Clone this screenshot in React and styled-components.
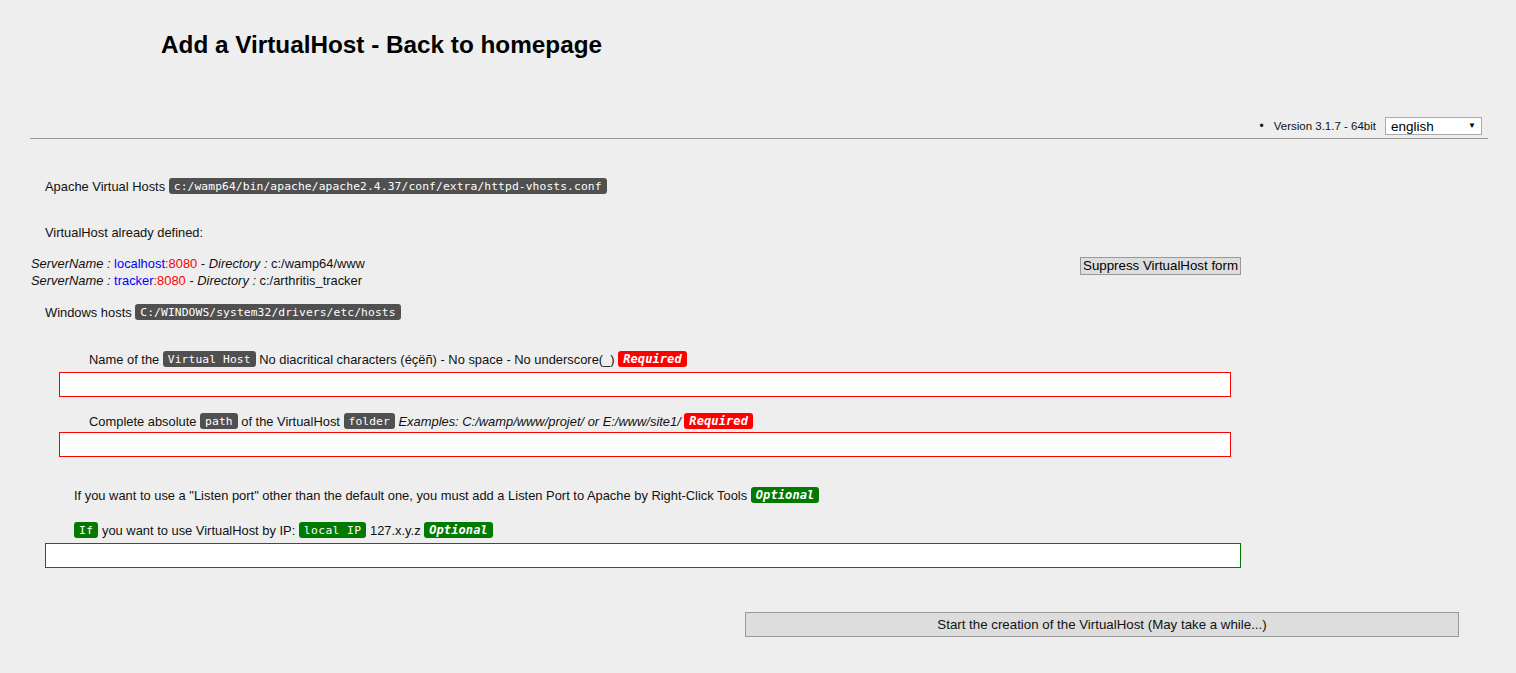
import styled, { createGlobalStyle } from "styled-components";

const GlobalStyle = createGlobalStyle`
  html, body {
    margin: 0;
    padding: 0;
    background: #eeeeee;
  }
  body {
    font-family: "Liberation Sans", Arial, sans-serif;
    font-size: 12.9px;
    color: #111;
  }
`;

const HOSTS = [
  { name: "localhost", port: "8080", dir: "c:/wamp64/www" },
  { name: "tracker", port: "8080", dir: "c:/arthritis_tracker" },
];

export default function App() {
  return (
    <>
      <GlobalStyle />
      <Page>
        <Title>Add a VirtualHost - Back to homepage</Title>

        <VersionRow>
          <Bullet>•</Bullet>
          <VersionText>Version 3.1.7 - 64bit</VersionText>
          <SelectWrap>
            <LangSelect defaultValue="english">
              <option value="english">english</option>
              <option value="french">français</option>
            </LangSelect>
            <Arrow>▼</Arrow>
          </SelectWrap>
        </VersionRow>
        <Rule />

        <Line $indent={15} $top={39}>
          Apache Virtual Hosts&nbsp;
          <Badge>c:/wamp64/bin/apache/apache2.4.37/conf/extra/httpd-vhosts.conf</Badge>
        </Line>

        <Line $indent={15} $top={30}>VirtualHost already defined:</Line>

        <Defined>
          <HostList>
            {HOSTS.map((h) => (
              <HostLine key={h.name}>
                <em>ServerName :</em> <Blue>{h.name}</Blue>
                <Red>:{h.port}</Red> - <em>Directory :</em> {h.dir}
              </HostLine>
            ))}
          </HostList>
          <GreyButton>Suppress VirtualHost form</GreyButton>
        </Defined>

        <Line $indent={15} $top={15}>
          Windows hosts&nbsp;
          <Badge>C:/WINDOWS/system32/drivers/etc/hosts</Badge>
        </Line>

        <Line $indent={59} $top={31}>
          Name of the&nbsp;<Badge>Virtual Host</Badge>&nbsp;No diacritical characters (éçëñ) -
          No space - No underscore(_)&nbsp;<Badge $kind="required">Required</Badge>
        </Line>
        <Field $indent={29} $width={1172} $gap={5} />

        <Line $indent={59} $top={16}>
          Complete absolute&nbsp;<Badge>path</Badge>&nbsp;of the VirtualHost&nbsp;
          <Badge>folder</Badge>&nbsp;<em>Examples: C:/wamp/www/projet/ or E:/www/site1/</em>
          &nbsp;<Badge $kind="required">Required</Badge>
        </Line>
        <Field $indent={29} $width={1172} $gap={3} />

        <Line $indent={44} $top={30}>
          If you want to use a "Listen port" other than the default one, you must add a Listen
          Port to Apache by Right-Click Tools&nbsp;<Badge $kind="optional">Optional</Badge>
        </Line>

        <Line $indent={44} $top={19}>
          <Badge $kind="ok">If</Badge>&nbsp;you want to use VirtualHost by IP:&nbsp;
          <Badge $kind="ok">local IP</Badge>&nbsp;127.x.y.z&nbsp;
          <Badge $kind="optional">Optional</Badge>
        </Line>
        <Field $indent={15} $width={1196} $gap={5} $green />

        <SubmitButton>Start the creation of the VirtualHost (May take a while...)</SubmitButton>
      </Page>
    </>
  );
}

const Page = styled.div`
  display: flex;
  flex-direction: column;
  padding: 0 28px 40px 30px;
`;

const Title = styled.h1`
  margin: 30px 0 0 131px;
  font-size: 24.3px;
  line-height: 30px;
  font-weight: bold;
  color: #000;
`;

const VersionRow = styled.div`
  display: flex;
  align-items: center;
  justify-content: flex-end;
  height: 20px;
  margin-top: 56px;
  padding-right: 6px;
  font-size: 11.5px;
`;

const Bullet = styled.span`
  font-size: 12px;
  margin-right: 10px;
`;

const VersionText = styled.span`
  margin-right: 9px;
`;

const SelectWrap = styled.div`
  position: relative;
  width: 97px;
  height: 18px;
`;

const LangSelect = styled.select`
  appearance: none;
  width: 100%;
  height: 100%;
  margin: 0;
  padding: 0 0 0 5px;
  border: 1px solid #a9a9a9;
  border-radius: 0;
  background: #fff;
  font-family: "Liberation Sans", Arial, sans-serif;
  font-size: 13.5px;
  color: #000;
  outline: none;
`;

const Arrow = styled.span`
  position: absolute;
  right: 6px;
  top: 4px;
  font-size: 8px;
  line-height: 9px;
  color: #000;
  pointer-events: none;
`;

const Rule = styled.hr`
  margin: 2px 0 0;
  border: none;
  border-top: 1px solid #999;
  height: 0;
`;

const Line = styled.div`
  display: flex;
  align-items: center;
  white-space: pre;
  height: 16px;
  margin-top: ${(p) => p.$top}px;
  margin-left: ${(p) => p.$indent}px;

  em {
    font-style: italic;
  }
`;

const BADGE_BG = {
  plain: "#505050",
  required: "#ff0000",
  optional: "#007a00",
  ok: "#007a00",
};

const isTag = (p) => p.$kind === "required" || p.$kind === "optional";

const Badge = styled.span`
  display: inline-flex;
  align-items: center;
  height: 16px;
  padding: 0 5px;
  border-radius: 3px;
  background: ${(p) => BADGE_BG[p.$kind || "plain"]};
  color: #fff;
  font-family: "DejaVu Sans Mono", "Liberation Mono", monospace;
  font-size: ${(p) => (isTag(p) ? "12px" : "11.3px")};
  font-style: ${(p) => (isTag(p) ? "italic" : "normal")};
  font-weight: ${(p) => (isTag(p) ? "bold" : "normal")};
  letter-spacing: ${(p) => (p.$kind === "ok" ? "0.4px" : "0.1px")};
  white-space: pre;
`;

const Defined = styled.div`
  display: flex;
  justify-content: space-between;
  align-items: flex-start;
  width: 1211px;
  margin-top: 15px;
`;

const HostList = styled.div`
  display: flex;
  flex-direction: column;
  margin-left: 1px;
`;

const HostLine = styled.div`
  line-height: 17px;
  white-space: pre;
`;

const Blue = styled.span`
  color: #0000ff;
`;

const Red = styled.span`
  color: #ff0000;
`;

const GreyButton = styled.button`
  margin-top: 2px;
  height: 18px;
  padding: 0 2px;
  border: 1px solid #999;
  background: #dddddd;
  font-family: "Liberation Sans", Arial, sans-serif;
  font-size: 13.3px;
  line-height: 14px;
  color: #000;
  border-radius: 0;
`;

const Field = styled.input.attrs({ type: "text" })`
  box-sizing: border-box;
  width: ${(p) => p.$width}px;
  height: 25px;
  margin: ${(p) => p.$gap}px 0 0 ${(p) => p.$indent}px;
  border: 1px solid ${(p) => (p.$green ? "#007a00" : "#ff0000")};
  background: #fff;
  outline: none;
`;

const SubmitButton = styled.button`
  align-self: flex-start;
  box-sizing: border-box;
  width: 714px;
  height: 25px;
  margin: 44px 0 0 715px;
  border: 1px solid #999;
  border-radius: 0;
  background: #dddddd;
  font-family: "Liberation Sans", Arial, sans-serif;
  font-size: 13.3px;
  color: #111;
`;
